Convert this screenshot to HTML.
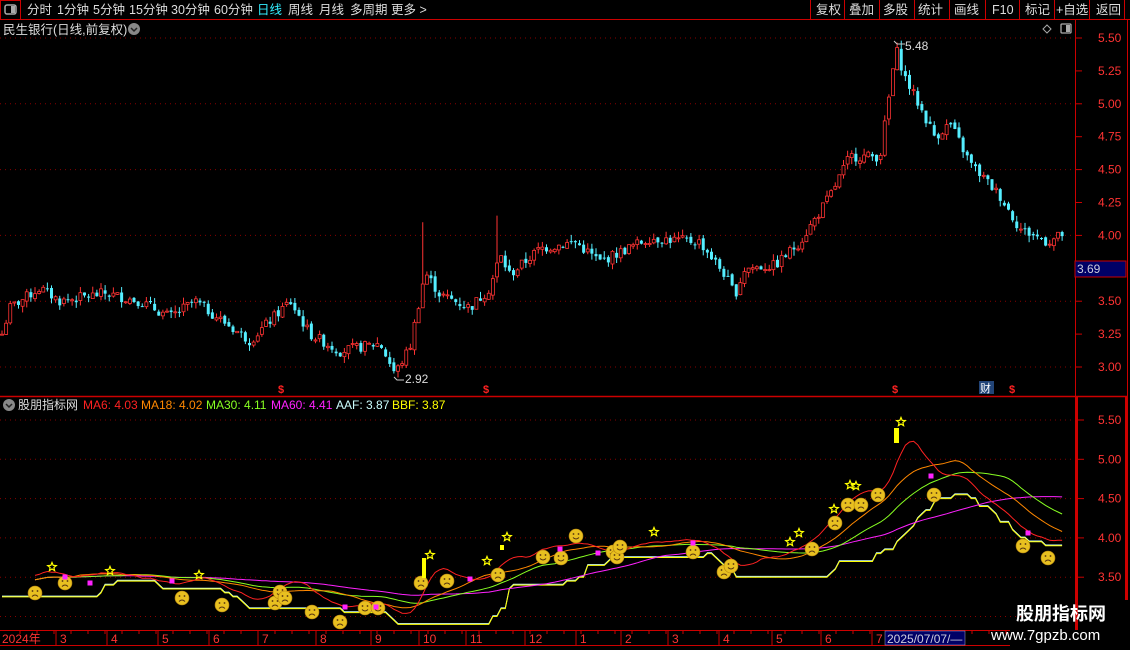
<!DOCTYPE html>
<html><head><meta charset="utf-8"><style>
body{margin:0;background:#000;width:1130px;height:650px;overflow:hidden;font-family:"Liberation Sans","Noto Sans CJK SC",sans-serif;}
svg{display:block}
text{font-family:"Liberation Sans","Noto Sans CJK SC",sans-serif;}
</style></head><body>
<svg id="s" width="1130" height="650" xmlns="http://www.w3.org/2000/svg">
<rect width="1130" height="650" fill="#000"/>
<!-- top toolbar -->
<line x1="0" y1="19.5" x2="1130" y2="19.5" stroke="#c00" />
<rect x="0.5" y="0.5" width="20" height="19" fill="none" stroke="#c00"/>
<rect x="5" y="5" width="11" height="9" rx="2" fill="none" stroke="#aaa" stroke-width="1.5"/><rect x="11" y="6" width="4" height="7" fill="#aaa"/>
<g font-size="12.5" fill="#ddd">
<text x="27" y="14">分时</text><text x="57" y="14">1分钟</text><text x="93" y="14">5分钟</text><text x="129" y="14">15分钟</text><text x="171" y="14">30分钟</text><text x="214" y="14">60分钟</text>
<text x="257" y="14" fill="#3ef">日线</text><text x="288" y="14">周线</text><text x="319" y="14">月线</text><text x="350" y="14">多周期</text><text x="391" y="14">更多 &gt;</text>
<text x="816" y="14">复权</text><text x="849" y="14">叠加</text><text x="883" y="14">多股</text><text x="918" y="14">统计</text><text x="954" y="14">画线</text><text x="992" y="14">F10</text><text x="1025" y="14">标记</text><text x="1056" y="14">+自选</text><text x="1096" y="14">返回</text>
</g>
<g stroke="#c00"><line x1="810.5" y1="0" x2="810.5" y2="19"/><line x1="844.5" y1="0" x2="844.5" y2="19"/><line x1="879.5" y1="0" x2="879.5" y2="19"/><line x1="914.5" y1="0" x2="914.5" y2="19"/><line x1="949.5" y1="0" x2="949.5" y2="19"/><line x1="985.5" y1="0" x2="985.5" y2="19"/><line x1="1019.5" y1="0" x2="1019.5" y2="19"/><line x1="1054.5" y1="0" x2="1054.5" y2="19"/><line x1="1089.5" y1="0" x2="1089.5" y2="19"/><line x1="1124.5" y1="0" x2="1124.5" y2="19"/></g>
<text x="3" y="34" font-size="12.5" fill="#ddd">民生银行(日线,前复权)</text>
<circle cx="134" cy="29" r="6" fill="#888"/><path d="M131 28l3 3 3-3" stroke="#222" stroke-width="1.5" fill="none"/>
<path d="M1047 25l4 4-4 4-4-4z" fill="none" stroke="#aaa"/>
<rect x="1061" y="24" width="10" height="9" rx="1" fill="none" stroke="#aaa" stroke-width="1.3"/><rect x="1066" y="25" width="4" height="7" fill="#aaa"/>
<!-- frame -->
<line x1="1075.5" y1="20" x2="1075.5" y2="630" stroke="#c00"/>
<line x1="1127.5" y1="20" x2="1127.5" y2="600" stroke="#c00"/>
<line x1="0" y1="396.5" x2="1128" y2="396.5" stroke="#c00" stroke-width="1.5"/>
<line x1="1077" y1="397" x2="1077" y2="630" stroke="#c00" stroke-width="2"/>
<line x1="1126" y1="397" x2="1126" y2="600" stroke="#c00" stroke-width="2"/>
<g id="grid"></g>
<g id="candles"></g>
<g id="lower"></g>
<g font-size="12" fill="#f33" id="axis"></g>
<rect x="1075" y="261" width="51" height="16" fill="#006" stroke="#c00"/>
<text x="1077" y="273" font-size="12" fill="#ccd">3.69</text>
<text x="905" y="50" font-size="12" fill="#ddd">5.48</text>
<path d="M894 41l3 3h8" stroke="#ccc" fill="none"/>
<text x="405" y="383" font-size="12" fill="#ddd">2.92</text>
<path d="M394 377l3 3h7" stroke="#ccc" fill="none"/>
<g font-size="11" fill="#f22" font-weight="bold"><text x="278" y="393">$</text><text x="483" y="393">$</text><text x="892" y="393">$</text><text x="1009" y="393">$</text></g>
<rect x="979" y="381" width="15" height="13" fill="#247"/><text x="980" y="392" font-size="11" fill="#fff">财</text>
<!-- lower header -->
<circle cx="9" cy="405" r="6" fill="#888"/><path d="M6 404l3 3 3-3" stroke="#222" stroke-width="1.5" fill="none"/>
<g font-size="12"><text x="18" y="409" fill="#ddd">股朋指标网</text><text x="83" y="409" fill="#f22">MA6: 4.03</text><text x="141" y="409" fill="#f80">MA18: 4.02</text><text x="206" y="409" fill="#8f2">MA30: 4.11</text><text x="271" y="409" fill="#f2f">MA60: 4.41</text><text x="336" y="409" fill="#cff">AAF: 3.87</text><text x="392" y="409" fill="#ff0">BBF: 3.87</text></g>
<!-- date axis -->
<line x1="0" y1="630.5" x2="1010" y2="630.5" stroke="#c00"/>
<line x1="0" y1="645.5" x2="1010" y2="645.5" stroke="#c00"/>
<g id="dates" font-size="12" fill="#f33"></g>
<rect x="885" y="631" width="80" height="14" fill="#006" stroke="#aac" stroke-width="0.5"/>
<text x="887" y="643" font-size="12" fill="#ccd">2025/07/07/—</text>
<text x="1016" y="620" font-size="18" font-weight="bold" fill="#fff">股朋指标网</text>
<text x="991" y="640" font-size="15" fill="#fff">www.7gpzb.com</text>
</svg>
<script>
var NS="http://www.w3.org/2000/svg";
function el(p,t,a,txt){var e=document.createElementNS(NS,t);for(var k in a)e.setAttribute(k,a[k]);if(txt)e.textContent=txt;document.getElementById(p).appendChild(e);return e;}
function yp(p){return 38+(5.5-p)*131.6;}
function yl(v){return 420+(5.5-v)*78.6;}
// grid
[3,3.5,4,4.5,5,5.5].forEach(function(p){el('grid','line',{x1:0,x2:1075,y1:yp(p),y2:yp(p),stroke:'#800','stroke-dasharray':'1 4'});});
[5.5,5,4.5,4,3.5,3].forEach(function(p){el('grid','line',{x1:0,x2:1075,y1:yl(p),y2:yl(p),stroke:'#800','stroke-dasharray':'1 4'});});
// axis labels
for(var p=3;p<=5.51;p+=0.25){el('axis','text',{x:1098,y:yp(p)+4},p.toFixed(2));el('grid','line',{x1:1075,x2:1082,y1:yp(p),y2:yp(p),stroke:'#c00'});}
[5.5,5,4.5,4,3.5].forEach(function(p){el('axis','text',{x:1098,y:yl(p)+4},p.toFixed(2));el('grid','line',{x1:1077,x2:1084,y1:yl(p),y2:yl(p),stroke:'#c00'});});
// price series
var K=[[0,3.2],[10,3.45],[40,3.6],[60,3.5],[105,3.56],[140,3.5],[170,3.38],[195,3.5],[250,3.2],[290,3.5],[310,3.25],[340,3.12],[380,3.18],[395,2.95],[410,3.15],[425,3.72],[440,3.55],[470,3.45],[490,3.6],[500,3.85],[510,3.7],[540,3.9],[575,3.95],[600,3.8],[650,3.98],[700,3.95],[725,3.7],[735,3.55],[745,3.75],[775,3.77],[800,3.95],[830,4.3],[850,4.6],[880,4.6],[890,5.1],[896,5.42],[905,5.2],[915,5.05],[935,4.75],[950,4.85],[970,4.55],[1000,4.3],[1020,4.05],[1048,3.95],[1066,4.02]];
function interp(x){for(var i=1;i<K.length;i++){if(x<=K[i][0]){var a=K[i-1],b=K[i];return a[1]+(b[1]-a[1])*(x-a[0])/(b[0]-a[0]);}}return K[K.length-1][1];}
var seed=7;function rnd(){seed=(seed*9301+49297)%233280;return seed/233280;}
var N=258,xs=[],cl=[],op=[],hi=[],lo=[];
for(var i=0;i<N;i++){var x=2+i*4.125;xs.push(x);var c=interp(x)+(rnd()-0.5)*0.08;cl.push(c);var o=i?cl[i-1]+(rnd()-0.5)*0.03:c;op.push(o);hi.push(Math.max(o,c)+rnd()*0.05);lo.push(Math.min(o,c)-rnd()*0.05);}
hi[218]=5.48;lo[96]=2.92;hi[102]=4.1;hi[120]=4.15;
for(var i=0;i<N;i++){var up=cl[i]>=op[i];var col=up?'#f33':'#5ef';var x=xs[i];
el('candles','line',{x1:x,x2:x,y1:yp(hi[i]),y2:yp(lo[i]),stroke:col});
var t=yp(Math.max(op[i],cl[i])),b=yp(Math.min(op[i],cl[i]));
el('candles','rect',{x:x-1.5,y:t,width:3,height:Math.max(1,b-t),fill:up?'#000':col,stroke:col,'stroke-width':up?0.8:0});}
function ma(n){var r=[];for(var i=0;i<N;i++){var s=0,c=0;for(var j=Math.max(0,i-n+1);j<=i;j++){s+=cl[j];c++;}r.push(s/c);}return r;}
function line(arr,col,start){var d='';for(var i=start;i<N;i++)d+=(d?'L':'M')+xs[i].toFixed(1)+' '+yl(arr[i]).toFixed(1);el('lower','path',{d:d,stroke:col,fill:'none','stroke-width':1});}
var mn=[];for(var i=0;i<N;i++){var m=9;for(var j=Math.max(0,i-22);j<=i;j++)m=Math.min(m,lo[j]);mn.push(Math.round(m*20)/20);}
var mn2=mn.map(function(v,i){return v+0.01;});
line(mn2,'#cff',0);line(mn,'#ff0',0);
line(ma(60),'#f2f',8);line(ma(30),'#8f2',8);line(ma(18),'#f80',8);line(ma(6),'#f22',8);
// symbols
function face(x,y,happy){el('lower','circle',{cx:x,cy:y,r:7,fill:'#e8c020',stroke:'#b08010','stroke-width':0.6});
el('lower','circle',{cx:x-2.5,cy:y-2,r:0.9,fill:'#531'});el('lower','circle',{cx:x+2.5,cy:y-2,r:0.9,fill:'#531'});
el('lower','path',{d:happy?'M'+(x-3)+' '+(y+1.5)+'q3 3 6 0':'M'+(x-3)+' '+(y+3.5)+'q3 -3 6 0',stroke:'#531',fill:'none','stroke-width':1});}
[[35,593,0],[65,583,0],[182,598,0],[222,605,0],[275,603,0],[280,592,1],[285,598,0],[312,612,0],[340,622,0],[365,608,1],[378,608,1],[421,583,0],[447,581,0],[498,575,0],[543,557,1],[561,558,1],[576,536,1],[613,552,1],[617,557,1],[620,547,1],[693,552,0],[724,572,0],[731,566,1],[812,549,0],[835,523,0],[848,505,0],[861,505,0],[878,495,0],[934,495,0],[1023,546,0],[1048,558,0]].forEach(function(f){face(f[0],f[1],f[2]);});
function star(x,y){var d='';for(var k=0;k<10;k++){var r=k%2?2:4.5,a=-Math.PI/2+k*Math.PI/5;d+=(k?'L':'M')+(x+r*Math.cos(a)).toFixed(1)+' '+(y+r*Math.sin(a)).toFixed(1);}el('lower','path',{d:d+'Z',fill:'none',stroke:'#ff0','stroke-width':1.2});}
[[52,567],[110,571],[199,575],[430,555],[487,561],[507,537],[654,532],[790,542],[799,533],[834,509],[850,485],[856,486],[901,422]].forEach(function(s){star(s[0],s[1]);});
[[422,558,4,20],[500,545,4,5],[894,428,5,15]].forEach(function(b){el('lower','rect',{x:b[0],y:b[1],width:b[2],height:b[3],fill:'#ff0'});});
[[65,577],[90,583],[172,581],[345,607],[376,607],[470,579],[560,549],[598,553],[693,543],[931,476],[1028,533]].forEach(function(m){el('lower','rect',{x:m[0]-2.5,y:m[1]-2.5,width:5,height:5,fill:'#f2f'});});
// dates
[["2024年",2],["3",60],["4",111],["5",162],["6",213],["7",262],["8",320],["9",375],["10",423],["11",470],["12",529],["1",580],["2",625],["3",672],["4",723],["5",776],["6",825],["7",876]].forEach(function(d){el('dates','text',{x:d[1],y:643},d[0]);if(d[1]>10)el('dates','line',{x1:d[1]-4,x2:d[1]-4,y1:631,y2:645,stroke:'#c00'});});
for(var x=20;x<1010;x+=17)el('dates','line',{x1:x,x2:x,y1:631,y2:634,stroke:'#c00'});
</script>
</body></html>
